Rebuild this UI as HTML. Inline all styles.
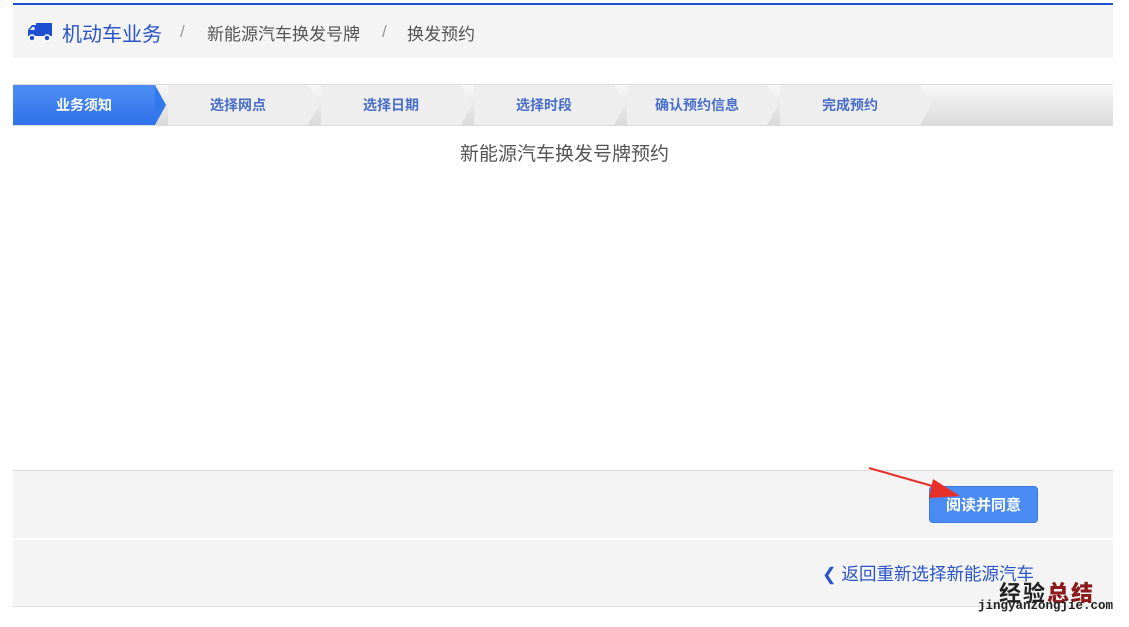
<!DOCTYPE html>
<html><head><meta charset="utf-8"><style>
*{margin:0;padding:0;box-sizing:border-box}
body{width:1129px;height:627px;background:#fff;font-family:"Liberation Sans","Noto Sans CJK SC",sans-serif;position:relative;overflow:hidden}
.topline{position:absolute;left:13px;top:3px;width:1100px;height:2px;background:#1e4fd0}
.bc{position:absolute;left:13px;top:5px;width:1100px;height:53px;background:#f4f4f4;font-size:17px;color:#555}
.bc span{position:absolute;top:15px;white-space:nowrap}
.bc .home{color:#2a55c8;font-size:20px;top:13px}
.bc .sep{color:#999;top:17px}
.steps{position:absolute;left:13px;top:84px;width:1100px;height:42px;background:linear-gradient(#f8f8f8,#dadada);border-top:1px solid #ddd;border-bottom:1px solid #ddd}
.st{position:absolute;top:0;height:40px;width:153px;line-height:40px;text-align:center;font-size:14px;font-weight:bold;color:#4a6fc9;background:#eee}
.st.a{background:linear-gradient(#4d8ef5,#2f72ea);color:#fff}
.arr{position:absolute;top:0;width:0;height:0;border-top:20px solid transparent;border-bottom:20px solid transparent;border-left:11px solid #eee}
.title{position:absolute;top:139px;width:1129px;text-align:center;font-size:19px;color:#555}
.f1{position:absolute;left:13px;top:470px;width:1100px;height:68px;background:#f4f4f4;border-top:1px solid #ddd}
.btn{position:absolute;left:929px;top:486px;width:109px;height:37px;background:#4a8bf4;border-radius:4px;color:#fff;font-weight:bold;font-size:15px;text-align:center;line-height:37px;border:1px solid #3a7ae0}
.f2{position:absolute;left:13px;top:540px;width:1100px;height:67px;background:#f4f4f4;border-bottom:1px solid #ddd}
.back{position:absolute;left:822px;top:561px;color:#2a55c8;font-size:17.5px;white-space:nowrap}
.wm{position:absolute;left:999px;top:576px;font-size:22px;font-weight:bold;color:#222;letter-spacing:2px}
.wm b{color:#8b1a1a}
.wm2{position:absolute;left:978px;top:599px;font-size:12.5px;font-weight:bold;color:#222;font-family:"Liberation Mono",monospace}
</style></head><body>
<div class="topline"></div>
<div class="bc">
<svg style="position:absolute;left:14px;top:17px" width="26" height="20" viewBox="0 0 26 20"><path d="M1 8 L5 3 H9 V14 H1 Z" fill="#1e4fd0"/><rect x="9" y="1" width="16" height="13" fill="#1e4fd0"/><path d="M3 8 L5.5 5 H7.5 V8 Z" fill="#fff"/><circle cx="5" cy="16" r="3" fill="#1e4fd0" stroke="#fff" stroke-width="1.5"/><circle cx="20" cy="16" r="3" fill="#1e4fd0" stroke="#fff" stroke-width="1.5"/></svg>
<span class="home" style="left:49px">机动车业务</span><span class="sep" style="left:167px">/</span><span style="left:194px">新能源汽车换发号牌</span><span class="sep" style="left:369px">/</span><span style="left:394px">换发预约</span></div>
<div class="steps">
<div class="st a" style="left:0;width:142px">业务须知</div><div class="arr" style="left:142px;border-left-color:#3279ec"></div>
<div class="st" style="left:155px;width:140px">选择网点</div><div class="arr" style="left:295px"></div>
<div class="st" style="left:308px;width:140px">选择日期</div><div class="arr" style="left:448px"></div>
<div class="st" style="left:461px;width:140px">选择时段</div><div class="arr" style="left:601px"></div>
<div class="st" style="left:614px;width:140px">确认预约信息</div><div class="arr" style="left:754px"></div>
<div class="st" style="left:767px;width:140px">完成预约</div><div class="arr" style="left:907px"></div>
</div>
<div class="title">新能源汽车换发号牌预约</div>
<div class="f1"></div>
<div class="btn">阅读并同意</div>
<svg style="position:absolute;left:865px;top:465px" width="100" height="40"><path d="M4 3 L78 24" stroke="#e8302a" stroke-width="2"/><path d="M68 14 L95 31 L64 33 Z" fill="#e8302a"/></svg>
<div class="f2"></div>
<div class="back">❮ 返回重新选择新能源汽车</div>
<div class="wm">经验<b>总结</b></div>
<div class="wm2">jingyanzongjie.com</div>
</body></html>
